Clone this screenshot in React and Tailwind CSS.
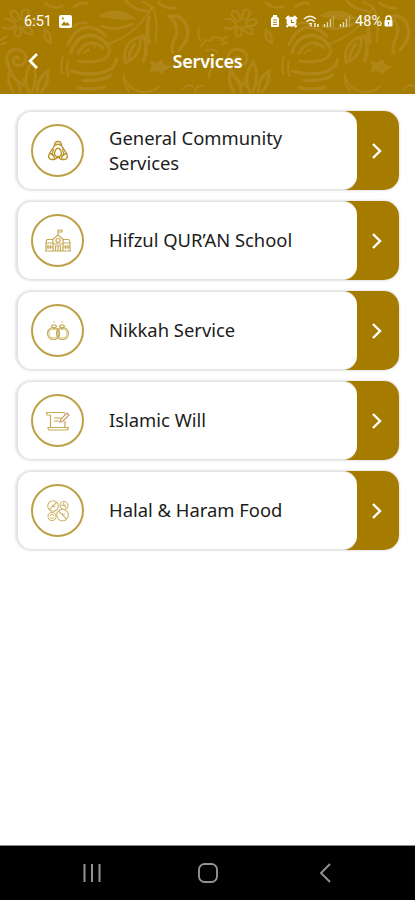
const GOLD = "#a67c00";

/* Header background */
function FloralTile() {
  return (
    <g id="floral">
      <g transform="scale(.3333)" strokeWidth="9">
        {/* large bloom */}
        <path d="M204 133C222 95 245 78 272 82q28 6 45 26" strokeWidth="10" />
        <path d="M213 158C222 122 250 101 281 107q30 7 45 34" strokeWidth="11" />
        <path d="M234 160q15-29 41-31 20-1 34 15M330 149q-3 25-29 32-30 8-65 2" />
        <path d="M350 178q-4 28-37 38-45 12-98-2M333 226q-25 18-82 15M235 263q30 9 77-1" strokeWidth="10" />
        <path d="M250 159l15-12 4 8M280 145l7-12 6 4" strokeWidth="5" />
        <path d="M220 82q13-17 39-13M188 172q-8 25-1 48M205 185q-8 20 0 43" strokeWidth="7" />
        {/* stem and leaves */}
        <path d="M325 132q85-29 132-111M457 21l-32-17M458 22q18 40 9 101" strokeWidth="6" />
        <path d="M294 48q39-29 91-8l24 16q-55 9-115-8z" fill="currentColor" stroke="none" />
        <path d="M305 78q38 18 92-6M378 4q25 27 62 29M476 8q20 18 49 17" />
        <path d="M376 188q-13-60 45-78 4 57-45 78zM386 172q5-25 19-40" />
        <path d="M430 107q17 31 1 75M447 52q-10 40 0 75" strokeWidth="11" />
        <path d="M508 48q44-5 54 37 7 34-24 64M514 53q27 31 11 62-15 30-6 43" strokeWidth="10" />
        <path d="M449 181l19 7 17-11 7 17 23 5-22 13-7 12-18-12-21 5 8-18z" fill="currentColor" stroke="none" />
        {/* lower scrolls */}
        <path d="M371 225q12 47 60 51 30 0 47-18M371 225q-2 28 16 48" strokeWidth="6" />
        <path d="M22 193c-16-62 64-53 55-13-6 23-40 20-37 1 2-12 14-12 16-5M23 185q7 47 47 70" />
        <path d="M27 218q35 25 33 57M27 218q-7 30 12 56M87 275q-23-42 10-91 20 44-1 91M112 275q-1-42 32-61-1 38-20 61" strokeWidth="9" />
        <path d="M70 239l15 36M145 246l-20 29" strokeWidth="6" />
        {/* small blossom */}
        <path d="M50 63q-25-17-15-30 20-3 23 27M65 58q-3-35 17-28 13 9-9 31M75 69q24-21 32-5-2 19-31 12M72 80q33 6 22 22-15 4-29-18M59 81q10 31-9 28-14-9 2-29M14 57q17-2 30 13M11 83q19 9 35-5" strokeWidth="7" />
        <path d="M135 89q20 12 17 40-24-9-17-40M136 9q22 19 51 10M223 20q18-14 39-10" strokeWidth="8" />
        <path d="M2 119l16-9M4 133l14-5" strokeWidth="7" />
        {/* sprig between repeats */}
        <path d="M597 84q-5 24 4 39M604 139q10-25 27-17 10-19 21-8 15-5 18 9M620 151q22-6 31 6M550 266q14-17 28-7M585 275q3-19 22-18M639 202q-13 10-12 30" strokeWidth="6" />
      </g>
    </g>
  );
}

function StatusIcons() {
  return (
    <div className="flex items-center">
      <svg width="10" height="14" viewBox="0 0 10 14" className="mr-[5px]">
        <path d="M3 1h4v1.500l2 1.800V12q0 1-1 1H2q-1 0-1-1V4.300l2-1.800z" fill="#fff" />
        <path d="M3 6h4M3 8.300h4M3 10.500h4" stroke={GOLD} strokeWidth=".9" />
      </svg>
      <svg width="13" height="13" viewBox="0 0 13 13" className="mr-[5px]">
        <circle cx="6.500" cy="6.800" r="5" fill="#fff" />
        <path d="M1 4l3-3M12 4L9 1M3 10.500l-1.500 1.500M10 10.500l1.500 1.500" stroke="#fff" strokeWidth="2.200" />
        <path d="M6.500 4.500V7.500H9" fill="none" stroke={GOLD} strokeWidth="1.100" />
      </svg>
      <svg width="17" height="14" viewBox="0 0 17 14" className="mr-[3px]" fill="none" stroke="#fff" opacity=".9">
        <path d="M1 5q6-5.500 12 0M3.500 7.700q4-4 8 0M6 10.200q1.500-1.500 3 0" strokeWidth="1.400" />
        <path d="M8.500 12l-1-1" strokeWidth="2" />
        <path d="M12 9v4" strokeWidth="1.500" />
        <path d="M15 10v3" strokeWidth="1.500" />
      </svg>
      <SignalBars />
      <SignalBars />
    </div>
  );
}

function SignalBars() {
  return (
    <svg width="12" height="12" viewBox="0 0 12 12" className="mr-[4px]" stroke="#fff">
      <path d="M1.500 9v3M4.500 7v5" strokeWidth="1.400" opacity=".75" />
      <path d="M7.500 4v8" strokeWidth="1.400" opacity=".65" />
      <path d="M10.500 1v11" strokeWidth="1.300" opacity=".25" />
    </svg>
  );
}

function CommunityIcon() {
  return (
    <svg width="24" height="24" viewBox="0 0 24 24" fill="none" stroke="#b8932a" strokeWidth="1.400">
      <path d="M12 2.500q3.500 0 3.500 4l5 8q2.500 5-2 6-4 .5-6.500-3-2.500 3.500-6.500 3-4.500-1-2-6l5-8q0-4 3.500-4z" />
      <path d="M9 6.500q3-2.500 6 0M3.500 15q3.500-1.500 5 4M20.500 15q-3.500-1.500-5 4" />
      <path d="M9 16.500q-1-3 .5-5.500 2.500-3.500 5 0 1.500 2.500.5 5.500l-3 2z" />
      <path d="M7.500 10l-1.500 6 2 1M16.500 10l1.500 6-2 1" strokeWidth="1.200" />
    </svg>
  );
}

function SchoolIcon() {
  return (
    <svg width="28" height="26" viewBox="0 0 28 26" fill="none" stroke="#c5aa55" strokeWidth="1.200">
      <path d="M14 7V2h4v2h-4M8 12l6-5 6 5M3 11.500h6M19 11.500h6M2 14v9h24v-9l-1-2.500M3 11.500L2 14M1 23h26M9 11v12M19 11v12M2 15h7M19 15h7" />
      <circle cx="14" cy="12.500" r="2" />
      <path d="M11.500 23v-5h5v5M14 18v5M4 17v4M6.500 17v4M21.500 17v4M24 17v4M2 19h7M19 19h7M9 16h10" />
    </svg>
  );
}

function RingsIcon() {
  return (
    <svg width="24" height="24" viewBox="0 0 24 24" fill="none" stroke="#c5aa55" strokeWidth="1.200">
      <circle cx="7.500" cy="14.500" r="6" />
      <circle cx="7.500" cy="14.500" r="4.500" strokeWidth=".7" />
      <circle cx="16.500" cy="14.500" r="6" />
      <circle cx="16.500" cy="14.500" r="4.500" strokeWidth=".7" />
      <path d="M6.500 6h3l1 1.500L8 10 5.500 7.500zM14.500 6h3l1 1.500-2.500 2.500-2.500-2.500z" />
      <path d="M8 3.500V2M16 3.500V2" strokeWidth=".8" />
    </svg>
  );
}

function WillIcon() {
  return (
    <svg width="26" height="24" viewBox="0 0 26 24" fill="none" stroke="#c5aa55" strokeWidth="1.200">
      <path d="M5.500 6v12.500M20 12v7M5.500 6H3Q1.500 6 1.500 3.500h17q1.500 0 1.500 2M6 18.500h17.500q0 2.500-2.500 2.500H5q-2 0-2-2.500h3" />
      <path d="M9 9h7M9 12h5" />
      <path d="M15 13l1-3 6-6 2 2-6 6z" stroke="#c99b6b" />
    </svg>
  );
}

function FoodIcon() {
  return (
    <svg width="26" height="24" viewBox="0 0 26 24" fill="none" stroke="#d0b66e" strokeWidth="1.100">
      <circle cx="8" cy="7" r="5.300" />
      <circle cx="17.500" cy="16" r="5.800" />
      <circle cx="7" cy="17.500" r="4" />
      <circle cx="19" cy="6.500" r="4" />
      <path d="M4.500 10.500l7-7M13.500 12l8 8M5 17q2-3 4 0M16 6l5 1M7 6l3 2M16 15h4M5 19h4M18 4l3 5" />
    </svg>
  );
}

const services = [
  { title: "General Community Services", Icon: CommunityIcon },
  { title: "Hifzul QUR’AN School", Icon: SchoolIcon },
  { title: "Nikkah Service", Icon: RingsIcon },
  { title: "Islamic Will", Icon: WillIcon },
  { title: "Halal & Haram Food", Icon: FoodIcon },
];

function ServiceCard({ title, Icon }) {
  return (
    <div className="flex h-[79px] rounded-[15px] bg-white shadow-[0_0_3px_#c8c8c8]">
      <div className="z-10 flex w-[341px] shrink-0 items-center rounded-l-[15px] rounded-r-[14px] border-y border-l-2 border-[#e3e3e3] bg-white pl-[13px]">
        <div className="flex size-[53px] shrink-0 items-center justify-center rounded-full border-2 border-[#bd9f46]">
          <Icon />
        </div>
        <p className="-mt-[2px] ml-[25px] w-[210px] text-[18.4px] leading-[25px] text-[#1c1c1c]">{title}</p>
      </div>
      {/* gold end runs under the rounded corners of the white panel */}
      <div className="-ml-[20px] flex flex-1 items-center justify-center rounded-r-[15px] bg-[#a67c00] pr-[3px] pl-[20px]">
        <svg width="12" height="18" viewBox="0 0 12 18" fill="none" stroke="#fff" strokeWidth="2.400">
          <path d="M2 2l7 7-7 7" />
        </svg>
      </div>
    </div>
  );
}

export default function App() {
  return (
    <div className="flex h-[900px] w-[415px] flex-col overflow-hidden bg-white font-['Noto_Sans',sans-serif]">
      <header className="relative h-[94px] bg-[#a67c00] text-white">
        <svg className="absolute inset-0 text-[#b08618]" width="415" height="94" fill="none" stroke="currentColor" strokeLinecap="round">
          <FloralTile />
          <use href="#floral" x="221" />
        </svg>

        {/* Status bar */}
        <div className="relative flex h-[42px] items-center justify-between pr-[22px] pl-[24px] font-[Roboto,sans-serif] text-[14.5px]">
          <div className="flex items-center gap-[7px]">
            <span className="pt-px">6:51</span>
            <svg width="13" height="13" viewBox="0 0 13 13">
              <rect width="13" height="13" rx="2" fill="#fff" />
              <path d="M2 10.500l3-4 2 2 1.500-1.500 2.500 3.500z" fill={GOLD} />
              <circle cx="3.800" cy="3.500" r="1" fill={GOLD} />
            </svg>
          </div>
          <div className="flex items-center">
            <StatusIcons />
            <span className="pt-px">48%</span>
            <svg width="9" height="12" viewBox="0 0 9 12" className="ml-[2px]">
              <path d="M2 6V3.500q0-2.500 2.500-2.500T7 3.500V6" fill="none" stroke="#fff" strokeWidth="1.500" />
              <rect x=".5" y="5" width="8" height="6.500" rx="1" fill="#fff" />
              <path d="M4.500 7v2.500" stroke={GOLD} />
            </svg>
          </div>
        </div>

        {/* Title */}
        <div className="relative grid h-[38px] grid-cols-[1fr_auto_1fr] items-center">
          <svg width="12" height="18" viewBox="0 0 12 18" className="ml-[27px]" fill="none" stroke="#fff" strokeWidth="2.600">
            <path d="M10 2L3 9l7 7" />
          </svg>
          <h1 className="text-[18px] font-semibold tracking-[-0.2px]">Services</h1>
        </div>
      </header>

      <main className="flex flex-1 flex-col gap-[11px] pt-[17px] pr-[16px] pl-[16px]">
        {services.map((service) => (
          <ServiceCard key={service.title} {...service} />
        ))}
      </main>

      {/* Android navigation */}
      <nav className="flex h-[55px] items-center border-t border-[#888] bg-black pl-[82px]">
        <svg width="20" height="20" viewBox="0 0 20 20" stroke="#929292" strokeWidth="2">
          <path d="M2.500 1v18M10 1v18M17.500 1v18" />
        </svg>
        <svg width="20" height="20" viewBox="0 0 20 20" className="ml-[96px]" fill="none" stroke="#929292" strokeWidth="1.900">
          <rect x="1" y="1" width="18" height="18" rx="5.500" />
        </svg>
        <svg width="14" height="20" viewBox="0 0 14 20" className="ml-[100px]" fill="none" stroke="#929292" strokeWidth="1.900">
          <path d="M12 1L3 10l9 9" />
        </svg>
      </nav>
    </div>
  );
}
